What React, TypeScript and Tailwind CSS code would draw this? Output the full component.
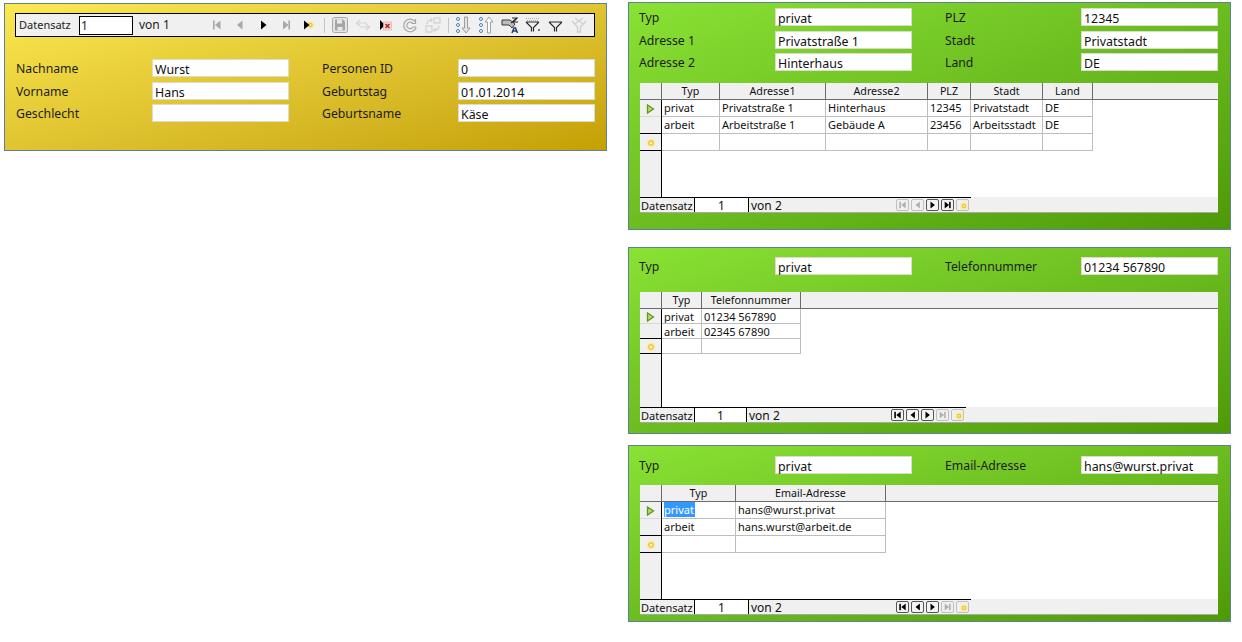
const yellowRows = [
  { className: "mt-[22px]", left: ["Nachname", "Wurst"], right: ["Personen ID", "0"] },
  { className: "mt-[5px]", left: ["Vorname", "Hans"], right: ["Geburtstag", "01.01.2014"] },
  { className: "mt-[4px]", left: ["Geschlecht", ""], right: ["Geburtsname", "Käse"] },
]

const addressFields = [
  { className: "", left: ["Typ", "privat"], right: ["PLZ", "12345"] },
  { className: "mt-[5px]", left: ["Adresse 1", "Privatstraße 1"], right: ["Stadt", "Privatstadt"] },
  { className: "mt-[4px]", left: ["Adresse 2", "Hinterhaus"], right: ["Land", "DE"] },
]

const addressColumns = [
  { label: "Typ", width: "w-[58px]" },
  { label: "Adresse1", width: "w-[106px]" },
  { label: "Adresse2", width: "w-[102px]" },
  { label: "PLZ", width: "w-[43px]" },
  { label: "Stadt", width: "w-[72px]" },
  { label: "Land", width: "w-[50px]" },
]

const addressRows = [
  ["privat", "Privatstraße 1", "Hinterhaus", "12345", "Privatstadt", "DE"],
  ["arbeit", "Arbeitstraße 1", "Gebäude A", "23456", "Arbeitsstadt", "DE"],
]

const phoneColumns = [
  { label: "Typ", width: "w-[40px]" },
  { label: "Telefonnummer", width: "w-[99px]" },
]

const phoneRows = [
  ["privat", "01234 567890"],
  ["arbeit", "02345 67890"],
]

const mailColumns = [
  { label: "Typ", width: "w-[74px]" },
  { label: "Email-Adresse", width: "w-[150px]" },
]

const mailRows = [
  ["privat", "hans@wurst.privat"],
  ["arbeit", "hans.wurst@arbeit.de"],
]

function Tri({ dir, color, x = 0 }: { dir: "l" | "r"; color: string; x?: number }) {
  const d = dir === "r" ? `M${x} 0.5 L${x + 5.5} 5 L${x} 9.5 Z` : `M${x + 5.5} 0.5 L${x} 5 L${x + 5.5} 9.5 Z`
  return <path d={d} fill={color} />
}

function Sun({ cx, cy, r = 2.5 }: { cx: number; cy: number; r?: number }) {
  return (
    <g>
      <circle cx={cx} cy={cy} r={r + 1.5} fill="#f8e9a8" />
      <circle cx={cx} cy={cy} r={r} fill="#f2c230" />
      <circle cx={cx} cy={cy} r={r - 1.3} fill="#fff3b8" />
    </g>
  )
}

function NavGlyph({ kind, color }: { kind: string; color: string }) {
  return (
    <svg width="11" height="10" viewBox="0 0 11 10">
      {kind === "first" && (
        <>
          <rect x="2" y="0.5" width="1.6" height="9" fill={color} />
          <Tri dir="l" color={color} x={4} />
        </>
      )}
      {kind === "prev" && <Tri dir="l" color={color} x={3} />}
      {kind === "next" && <Tri dir="r" color={color} x={3} />}
      {kind === "last" && (
        <>
          <Tri dir="r" color={color} x={2} />
          <rect x="7.4" y="0.5" width="1.6" height="9" fill={color} />
        </>
      )}
      {kind === "new" && (
        <>
          <Sun cx={6.5} cy={5} r={2.2} />
          <Tri dir="r" color="#000" x={0} />
        </>
      )}
    </svg>
  )
}

function SaveIcon() {
  return (
    <svg width="16" height="16" viewBox="0 0 16 16">
      <rect x="0.5" y="0.5" width="15" height="15" rx="2" fill="#e4e4e4" stroke="#a8a8a8" />
      <path d="M3 2.500h8l2 2v9H3z" fill="#a6a6a6" />
      <rect x="5" y="2.500" width="5" height="4" fill="#e8e8e8" />
      <rect x="5.500" y="10" width="5" height="3.500" fill="#e8e8e8" />
    </svg>
  )
}

function UndoIcon() {
  return (
    <svg width="16" height="12" viewBox="0 0 16 12" fill="none" stroke="#d4d4d4" strokeWidth="1.2">
      <path d="M5 1 1.500 4 5 7M1.500 4H12" />
      <path d="M11 5l3.500 3L11 11M14.500 8H5" />
    </svg>
  )
}

function DeleteIcon() {
  return (
    <svg width="14" height="12" viewBox="0 0 14 12">
      <path d="M1 1 L6 6 L1 11 Z" fill="#000" />
      <rect x="4.500" y="3" width="8" height="8" fill="#f3dcd8" stroke="#e0b0a8" strokeWidth="0.7" />
      <path d="M6.500 5l4 4M10.500 5l-4 4" stroke="#c0201a" strokeWidth="1.6" />
    </svg>
  )
}

function RefreshIcon() {
  return (
    <svg width="16" height="16" viewBox="0 0 16 16" fill="none" stroke="#a6a6a6">
      <path d="M13 4.500A6.300 6.300 0 1 0 14.200 10" strokeWidth="1.2" />
      <path d="M10.500 6A3.300 3.300 0 1 0 11 10h3" strokeWidth="1.2" />
      <path d="M13.500 2v4.500H9.500" strokeWidth="1.2" />
    </svg>
  )
}

function RefreshControlIcon() {
  return (
    <svg width="16" height="16" viewBox="0 0 16 16" fill="none" stroke="#cfcfcf" strokeWidth="1.2">
      <rect x="9" y="1" width="6" height="5" />
      <rect x="1" y="9" width="6" height="6" />
      <path d="M2 7c0-3 2-4 5-4M5.500 1.500 7 3 5.500 4.500M14 9c0 3-2 4-5 4M10.500 11.500 9 13l1.500 1.500" />
    </svg>
  )
}

function SortIcon({ up }: { up?: boolean }) {
  return (
    <svg width="16" height="18" viewBox="0 0 16 18">
      <circle cx="3" cy="3" r="1.5" fill="#fff" stroke="#4a7fb0" />
      <circle cx="3" cy="9" r="1.5" fill="#fff" stroke="#4a7fb0" />
      <circle cx="3" cy="15" r="1.5" fill="#fff" stroke="#4a7fb0" />
      <path
        d={up ? "M11 1l-4 5h2.500v11h3V6H15z" : "M11 17l-4-5h2.500V1h3v11H15z"}
        fill={up ? "#fdfdfd" : "#e4e4e4"}
        stroke="#8a8a8a"
        strokeWidth="0.8"
      />
    </svg>
  )
}

function AutoSortIcon() {
  return (
    <svg width="18" height="17" viewBox="0 0 18 17">
      <path d="M1 3h8l5 4-3 4-3-3H1z" fill="#bdbdbd" stroke="#3a3a3a" strokeWidth="1" />
      <path d="M10 6 15 2" stroke="#3a3a3a" strokeWidth="1.2" />
      <path d="M11 1h5l-4 4h5" fill="none" stroke="#222" strokeWidth="1.2" />
      <path d="M11 16l2-5h1.500l2 5M12 14h4" fill="none" stroke="#27406a" strokeWidth="1.5" />
    </svg>
  )
}

function FilterIcon({ color = "#2a2a2a", dotted, small }: { color?: string; dotted?: boolean; small?: boolean }) {
  return (
    <svg width="16" height="16" viewBox="0 0 16 16" fill="none">
      {dotted && <path d="M1 1.500h13M2 3.500h11" stroke="#b0b0b0" strokeDasharray="1 1" />}
      <path d="M1 5l5.500 5.500v4M14 5 8.500 10.500v4M1 5h13" stroke={color} strokeWidth="1.2" />
      {small && <path d="M14 12v2" stroke="#222" strokeWidth="1.2" />}
    </svg>
  )
}

function ClearFilterIcon() {
  return (
    <svg width="16" height="16" viewBox="0 0 16 16" fill="none" stroke="#cfcfcf" strokeWidth="1.3">
      <path d="M1 4l5.500 6v5h3v-5L15 4" />
      <path d="M4 1l8 6M12 1 4 7" />
    </svg>
  )
}

function ToolSlot({ children }: { children: React.ReactNode }) {
  return <div className="flex items-center justify-center shrink-0 w-[23.25px]">{children}</div>
}

function Separator() {
  return <div className="w-px h-[15px] bg-[#c4c4c4] mx-[3px] shrink-0" />
}

function Toolbar() {
  return (
    <div className="flex items-center w-[580px] h-[24px] bg-[#f0f0f0] border border-black pl-[3px] text-[11px] text-[#1c1c1c]">
      <span className="w-[60px] shrink-0">Datensatz</span>
      <div className="w-[54px] shrink-0 h-[19px] bg-white border border-black pl-[1px] leading-[17px] text-[12px]">1</div>
      <span className="ml-[6px] w-[66px] shrink-0 text-[12px]">von 1</span>
      <ToolSlot><NavGlyph kind="first" color="#a8a8a8" /></ToolSlot>
      <ToolSlot><NavGlyph kind="prev" color="#a8a8a8" /></ToolSlot>
      <ToolSlot><NavGlyph kind="next" color="#000" /></ToolSlot>
      <ToolSlot><NavGlyph kind="last" color="#a8a8a8" /></ToolSlot>
      <ToolSlot><NavGlyph kind="new" color="#000" /></ToolSlot>
      <Separator />
      <ToolSlot><SaveIcon /></ToolSlot>
      <ToolSlot><UndoIcon /></ToolSlot>
      <ToolSlot><DeleteIcon /></ToolSlot>
      <ToolSlot><RefreshIcon /></ToolSlot>
      <ToolSlot><RefreshControlIcon /></ToolSlot>
      <Separator />
      <ToolSlot><SortIcon /></ToolSlot>
      <ToolSlot><SortIcon up /></ToolSlot>
      <ToolSlot><AutoSortIcon /></ToolSlot>
      <ToolSlot><FilterIcon dotted small /></ToolSlot>
      <ToolSlot><FilterIcon /></ToolSlot>
      <ToolSlot><ClearFilterIcon /></ToolSlot>
    </div>
  )
}

function Field({ label, value }: { label: string; value: string }) {
  return (
    <div className="flex items-center h-[18px]">
      <span className="w-[136px] pt-[2px] text-[12.25px] text-[#1c1c1c]">{label}</span>
      <div className="w-[137px] h-[18px] bg-white border border-[#dcdccc] pl-[2px] text-[12.4px] leading-[19px] text-[#111]">
        {value}
      </div>
    </div>
  )
}

type FieldRowData = { className: string; left: string[]; right: string[] }

function FieldRow({ row }: { row: FieldRowData }) {
  return (
    <div className={`flex gap-[33px] ${row.className}`}>
      <Field label={row.left[0]} value={row.left[1]} />
      <Field label={row.right[0]} value={row.right[1]} />
    </div>
  )
}

function NavButton({ kind, on }: { kind: string; on: boolean }) {
  const color = on ? "#000" : "#b0b0b0"
  return (
    <div
      className={`w-[13px] h-[12px] rounded-[2px] border flex items-center justify-center ${
        on ? "border-[#555] bg-[#f4f4f4]" : "border-[#c0c0c0] bg-[#f0f0f0]"
      }`}
    >
      {kind === "new" ? (
        <svg width="10" height="9" viewBox="0 0 10 9">
          <Sun cx={6} cy={5} r={2.200} />
        </svg>
      ) : (
        <svg width="9" height="8" viewBox="0 0 11 10">
          {kind === "first" && (
            <>
              <rect x="1.500" y="1" width="2" height="8" fill={color} />
              <Tri dir="l" color={color} x={4} />
            </>
          )}
          {kind === "prev" && <Tri dir="l" color={color} x={3} />}
          {kind === "next" && <Tri dir="r" color={color} x={3} />}
          {kind === "last" && (
            <>
              <Tri dir="r" color={color} x={2} />
              <rect x="7.500" y="1" width="2" height="8" fill={color} />
            </>
          )}
        </svg>
      )}
    </div>
  )
}

type Column = { label: string; width: string }

type GridProps = {
  columns: Column[]
  rows: string[][]
  height: string
  rowHeight: string
  barWidth: string
  fieldWidth: string
  nav: boolean[]
  selectFirst?: boolean
}

function DataGrid({ columns, rows, height, rowHeight, barWidth, fieldWidth, nav, selectFirst }: GridProps) {
  const navKinds = ["first", "prev", "next", "last", "new"]
  const emptyRow = columns.map(() => "")
  return (
    <div className={`ml-[1px] w-[578px] flex flex-col bg-white border-b border-[#a8a8a8] text-[11px] text-[#111] ${height}`}>
      <div className="flex h-[17px] shrink-0 bg-[#f0f0f0] border-b border-[#6b6b6b]">
        <div className="w-[22px] border-r border-[#6b6b6b]" />
        {columns.map((col) => (
          <div
            key={col.label}
            className={`${col.width} border-r border-[#6b6b6b] text-center text-[10.7px] leading-[16px]`}
          >
            {col.label}
          </div>
        ))}
      </div>

      <div className="flex flex-1 min-h-0">
        <div className="w-[22px] bg-[#f0f0f0] border-r border-black flex flex-col shrink-0">
          <div className={`${rowHeight} border-b border-[#d8d8d8] flex items-center justify-center pt-[2px]`}>
            <svg width="9" height="10" viewBox="0 0 9 10">
              <path d="M1.500 1 7.500 5 1.500 9Z" fill="#b7d87a" stroke="#5e9a1a" strokeWidth="1.300" />
            </svg>
          </div>
          <div className={`${rowHeight} border-b border-black`} />
          <div className={`${rowHeight} border-b border-black flex items-center justify-center pt-[2px]`}>
            <svg width="10" height="10" viewBox="0 0 10 10">
              <Sun cx={5} cy={5} r={2.800} />
            </svg>
          </div>
        </div>
        <div className="flex flex-col">
          {[...rows, emptyRow].map((row, r) => (
            <div key={r} className={`flex ${rowHeight} border-b border-[#bdbdbd]`}>
              {row.map((cell, c) => (
                <div key={c} className={`${columns[c].width} border-r border-[#bdbdbd] pl-[2px] leading-[15px] overflow-hidden whitespace-nowrap`}>
                  {selectFirst && r === 0 && c === 0 ? (
                    <span className="inline-block w-[31px] bg-[#3399ff] text-white">{cell}</span>
                  ) : (
                    cell
                  )}
                </div>
              ))}
            </div>
          ))}
        </div>
      </div>

      <div className="h-[15px] shrink-0 bg-[#f0f0f0] flex">
        <div className={`flex items-center border-t border-black text-[12px] ${barWidth}`}>
          <span className="w-[55px] pl-[1px] border-r border-black h-full text-[11px] leading-[15px] whitespace-nowrap">Datensatz</span>
          <span className={`${fieldWidth} bg-white border-r border-black h-full text-center leading-[15px]`}>1</span>
          <span className="pl-[2px] leading-[15px]">von 2</span>
          <div className="ml-auto flex gap-[2px] pr-[2px]">
            {navKinds.map((kind, i) => (
              <NavButton key={kind} kind={kind} on={nav[i]} />
            ))}
          </div>
        </div>
      </div>
    </div>
  )
}

function GreenPanel({ className, children }: { className: string; children: React.ReactNode }) {
  return (
    <div className={`w-[603px] border border-[#5b8299] bg-linear-to-br from-[#8ae234] to-[#4e9a06] pl-[10px] ${className}`}>
      {children}
    </div>
  )
}

export default function App() {
  return (
    <div className="flex w-[1242px] h-[642px] bg-white font-['Noto_Sans','Liberation_Sans',sans-serif]">
      <div className="w-[628px] shrink-0 pl-[4px] pt-[3px]">
        <div className="w-[603px] h-[148px] border border-[#5b8299] bg-linear-to-br from-[#fce94f] to-[#c4a000] pl-[10px] pt-[9px]">
          <Toolbar />
          <div className="ml-[1px]">
            {yellowRows.map((row) => (
              <FieldRow key={row.left[0]} row={row} />
            ))}
          </div>
        </div>
      </div>

      <div className="w-[603px] shrink-0 pt-[2px]">
        <GreenPanel className="h-[228px] pt-[5px]">
          {addressFields.map((row) => (
            <FieldRow key={row.left[0]} row={row} />
          ))}
          <div className="mt-[12px]">
            <DataGrid
              columns={addressColumns}
              rows={addressRows}
              height="h-[130px]"
              rowHeight="h-[17px]"
              barWidth="w-[331px]"
              fieldWidth="w-[54px]"
              nav={[false, false, true, true, false]}
            />
          </div>
        </GreenPanel>

        <GreenPanel className="h-[187px] mt-[17px] pt-[9px]">
          <FieldRow row={{ className: "", left: ["Typ", "privat"], right: ["Telefonnummer", "01234 567890"] }} />
          <div className="mt-[17px]">
            <DataGrid
              columns={phoneColumns}
              rows={phoneRows}
              height="h-[131px]"
              rowHeight="h-[15px]"
              barWidth="w-[326px]"
              fieldWidth="w-[52px]"
              nav={[true, true, true, false, false]}
            />
          </div>
        </GreenPanel>

        <GreenPanel className="h-[177px] mt-[11px] pt-[10px]">
          <FieldRow row={{ className: "", left: ["Typ", "privat"], right: ["Email-Adresse", "hans@wurst.privat"] }} />
          <div className="mt-[11px]">
            <DataGrid
              columns={mailColumns}
              rows={mailRows}
              height="h-[130px]"
              rowHeight="h-[17px]"
              barWidth="w-[331px]"
              fieldWidth="w-[54px]"
              nav={[true, true, true, false, false]}
              selectFirst
            />
          </div>
        </GreenPanel>
      </div>
    </div>
  )
}
